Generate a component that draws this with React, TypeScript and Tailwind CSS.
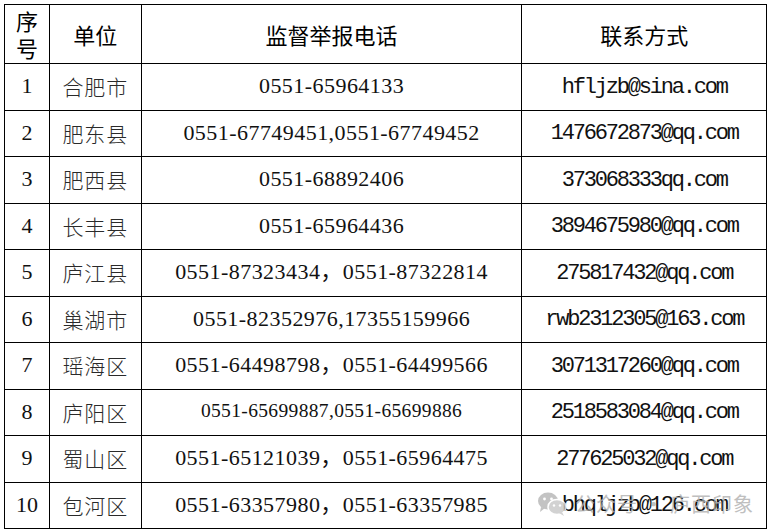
import React from "react";

const rows: { n: string; unit: string; phone: string; email: string; small?: boolean }[] = [
  { n: "1", unit: "合肥市", phone: "0551-65964133", email: "hfljzb@sina.com" },
  { n: "2", unit: "肥东县", phone: "0551-67749451,0551-67749452", email: "1476672873@qq.com" },
  { n: "3", unit: "肥西县", phone: "0551-68892406", email: "373068333qq.com" },
  { n: "4", unit: "长丰县", phone: "0551-65964436", email: "3894675980@qq.com" },
  { n: "5", unit: "庐江县", phone: "0551-87323434，0551-87322814", email: "275817432@qq.com" },
  { n: "6", unit: "巢湖市", phone: "0551-82352976,17355159966", email: "rwb2312305@163.com" },
  { n: "7", unit: "瑶海区", phone: "0551-64498798，0551-64499566", email: "3071317260@qq.com" },
  { n: "8", unit: "庐阳区", phone: "0551-65699887,0551-65699886", email: "2518583084@qq.com", small: true },
  { n: "9", unit: "蜀山区", phone: "0551-65121039，0551-65964475", email: "277625032@qq.com" },
  { n: "10", unit: "包河区", phone: "0551-63357980，0551-63357985", email: "bhqljzb@126.com" },
];

const cjk = "font-['Noto_Sans_CJK_SC',sans-serif]";
const serif = "font-['Liberation_Serif','Noto_Sans_CJK_SC',serif]";
const mono = "font-['Liberation_Mono','Noto_Sans_CJK_SC',monospace]";

const cell = "border-r border-b border-black flex items-center justify-center";

function WeChatIcon() {
  return (
    <svg width="30" height="26" viewBox="0 0 30 26">
      <ellipse cx="11" cy="10" rx="10" ry="8.5" fill="#b5b5b5" />
      <path d="M4 16 L3 21 L8 17 Z" fill="#b5b5b5" />
      <circle cx="7.5" cy="8" r="1.4" fill="#fff" />
      <circle cx="14.5" cy="8" r="1.4" fill="#fff" />
      <ellipse cx="20" cy="16" rx="9" ry="7.5" fill="#c8c8c8" stroke="#fff" strokeWidth="1.5" />
      <path d="M25 21 L27 25 L22 22 Z" fill="#c8c8c8" />
      <circle cx="17" cy="14.5" r="1.2" fill="#fff" />
      <circle cx="23" cy="14.5" r="1.2" fill="#fff" />
    </svg>
  );
}

export default function App() {
  const heights = ["h-[47px]", "h-[46px]"];
  return (
    <div className="w-[771px] h-[532px] bg-white relative overflow-hidden">
      <div className="ml-[4px] mt-[4px] w-[763px] border-l border-t border-black">
        <div className="flex h-[59px]">
          <div className={`${cell} w-[45px] ${cjk} text-[22px] text-black`}>
            <span className="w-[22px] leading-[27px] break-all text-center">序号</span>
          </div>
          <div className={`${cell} w-[92px] ${cjk} text-[22px] text-black`}>单位</div>
          <div className={`${cell} w-[381px] ${cjk} text-[22px] text-black`}>监督举报电话</div>
          <div className={`${cell} w-[245px] ${cjk} text-[22px] text-black`}>联系方式</div>
        </div>
        {rows.map((r, i) => (
          <div key={r.n} className={`flex ${heights[i % 2]}`}>
            <div className={`${cell} w-[45px] ${serif} text-[22px] text-[#111] pb-[3px]`}>{r.n}</div>
            <div className={`${cell} w-[92px] ${cjk} text-[21px] tracking-[1px] text-[#2a2a2a] font-light`}>{r.unit}</div>
            <div
              className={`${cell} w-[381px] ${serif} ${r.small ? "text-[19.5px] tracking-[0.35px]" : "text-[22px] tracking-[0.45px]"} text-[#111] whitespace-nowrap pb-[3px]`}
            >
              {r.phone}
            </div>
            <div className={`${cell} w-[245px] ${mono} text-[22px] tracking-[-2.2px] text-[#111] whitespace-nowrap`}>
              {r.email}
            </div>
          </div>
        ))}
      </div>
      <div className="absolute left-[537px] top-[489px] flex items-center gap-[8px] opacity-80 pointer-events-none">
        <WeChatIcon />
        <span className={`${cjk} text-[20px] text-[#b0b0b0] tracking-[1px]`}>公众号 · 庐西印象</span>
      </div>
    </div>
  );
}
